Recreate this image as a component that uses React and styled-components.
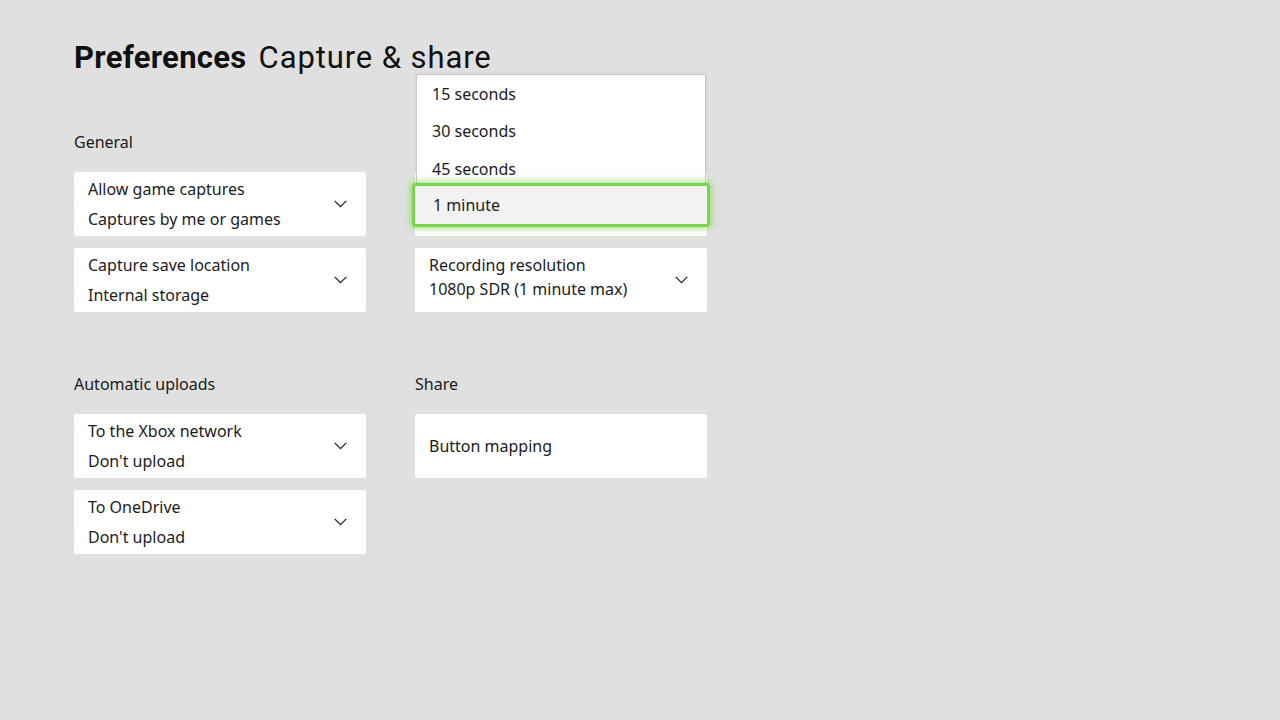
import React from "react";
import styled, { createGlobalStyle } from "styled-components";

const Global = createGlobalStyle`
  html, body { margin: 0; padding: 0; }
  body {
    background: #e0e0e0;
    font-family: "Noto Sans", "Open Sans", sans-serif;
    color: #1b1b1b;
  }
`;

const Page = styled.div`
  width: 1280px;
  height: 720px;
  box-sizing: border-box;
  padding: 37px 0 0 74px;
  background: #e0e0e0;
  overflow: hidden;
`;

const Title = styled.h1`
  margin: 0;
  font-family: Roboto, "Noto Sans", sans-serif;
  font-size: 31px;
  line-height: 42px;
  font-weight: 400;
  color: #111;
  display: flex;
  gap: 12px;
`;

const Strong = styled.span`
  font-weight: 700;
  letter-spacing: 0.3px;
`;

const Sub = styled.span`
  letter-spacing: 0.9px;
`;

const Sections = styled.div`
  margin-top: 53px;
  display: flex;
  flex-direction: column;
  gap: 62px;
`;

const Row = styled.div`
  display: grid;
  grid-template-columns: 292px 292px;
  column-gap: 49px;
`;

const Column = styled.div`
  display: flex;
  flex-direction: column;
  position: relative;
`;

const Label = styled.div`
  font-size: 16px;
  line-height: 20px;
  height: 20px;
  margin-bottom: 20px;
  color: #1b1b1b;
`;

const Cards = styled.div`
  display: flex;
  flex-direction: column;
  gap: 12px;
`;

const Card = styled.div`
  height: 64px;
  box-sizing: border-box;
  background: #fff;
  border-radius: 2px;
  display: flex;
  align-items: center;
  padding: 0 19px 0 14px;
  position: relative;
`;

const Lines = styled.div`
  flex: 1;
  display: flex;
  flex-direction: column;
  margin-top: ${(p) => (p.$compact ? "-6px" : "0")};
  font-size: 16px;
  line-height: ${(p) => (p.$compact ? "24px" : "30px")};
`;

const Chevron = () => (
  <svg width="13" height="8" viewBox="0 0 13 8" fill="none">
    <path d="M0.7 0.9 L6.5 6.6 L12.3 0.9" stroke="#222" strokeWidth="1.3" />
  </svg>
);

const Menu = styled.div`
  position: absolute;
  left: 1px;
  right: 1px;
  top: -58px;
  background: #fff;
  border: 1px solid #c8c8c8;
  border-bottom: none;
  box-shadow: 0 0 4px rgba(0, 0, 0, 0.08);
  z-index: 5;
`;

const Item = styled.div`
  height: 37.5px;
  display: flex;
  align-items: center;
  box-sizing: border-box;
  padding-left: 15px;
  font-size: 16px;
  color: #1b1b1b;
  ${(p) =>
    p.$active &&
    `
    margin: -5px -5px 0;
    height: 44px;
    padding-left: 18px;
    background: #f2f2f2;
    border: 3px solid #7ad44c;
    border-radius: 4px;
    box-shadow: 0 0 7px 2px rgba(120, 214, 70, 0.6);
  `}
`;

const Select = ({ title, value, compact }) => (
  <Card>
    <Lines $compact={compact}>
      <span>{title}</span>
      <span>{value}</span>
    </Lines>
    <Chevron />
  </Card>
);

export default function App() {
  return (
    <>
      <Global />
      <Page>
        <Title>
          <Strong>Preferences</Strong>
          <Sub>Capture &amp; share</Sub>
        </Title>
        <Sections>
          <Row>
            <Column>
              <Label>General</Label>
              <Cards>
                <Select title="Allow game captures" value="Captures by me or games" />
                <Select title="Capture save location" value="Internal storage" />
              </Cards>
            </Column>
            <Column>
              <Label />
              <Cards>
                <Card />
                <Select title="Recording resolution" value="1080p SDR (1 minute max)" compact />
              </Cards>
              <Menu>
                <Item>15 seconds</Item>
                <Item>30 seconds</Item>
                <Item>45 seconds</Item>
                <Item $active>1 minute</Item>
              </Menu>
            </Column>
          </Row>
          <Row>
            <Column>
              <Label>Automatic uploads</Label>
              <Cards>
                <Select title="To the Xbox network" value="Don't upload" />
                <Select title="To OneDrive" value="Don't upload" />
              </Cards>
            </Column>
            <Column>
              <Label>Share</Label>
              <Cards>
                <Card>
                  <Lines>Button mapping</Lines>
                </Card>
              </Cards>
            </Column>
          </Row>
        </Sections>
      </Page>
    </>
  );
}
